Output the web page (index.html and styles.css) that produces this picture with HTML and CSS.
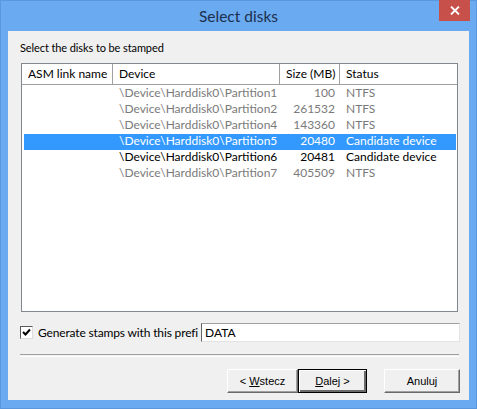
FILE: index.html
```html
<!DOCTYPE html>
<html>
<head>
	<link rel="stylesheet" href="styles.css">
</head>
<body>
	<div class="window">
		<div class="titlebar">
			<span class="title">Select disks</span>
			<button class="close" type="button">
				<svg width="10" height="9" viewBox="0 0 10 9">
					<path d="M1 0.5 L9 8.5 M9 0.5 L1 8.5" stroke="#fff" stroke-width="1.8" fill="none"/>
				</svg>
			</button>
		</div>

		<div class="client">
			<div class="label">Select the disks to be stamped</div>

			<div class="listview">
				<div class="header">
					<div class="col">ASM link name</div>
					<div class="col">Device</div>
					<div class="col">Size (MB)</div>
					<div class="col last">Status</div>
				</div>
				<div class="rows" id="rows"></div>
			</div>

			<div class="prefix">
				<span class="check">
					<svg width="9" height="9" viewBox="0 0 9 9">
						<path d="M1 4 L3.5 6.5 L8 1.5" stroke="#000" stroke-width="2" fill="none"/>
					</svg>
				</span>
				<span class="prefix-label">Generate stamps with this prefi</span>
				<input class="edit" type="text" value="DATA">
			</div>

			<div class="separator"></div>

			<div class="buttons">
				<button class="btn" type="button">&lt; <u>W</u>stecz</button>
				<button class="btn default" type="button"><u>D</u>alej &gt;</button>
				<button class="btn cancel" type="button">Anuluj</button>
			</div>
		</div>
	</div>

	<script>
	window.addEventListener('DOMContentLoaded', () => {
		const disks = [
			{ part: 1, size: 100, status: 'NTFS' },
			{ part: 2, size: 261532, status: 'NTFS' },
			{ part: 4, size: 143360, status: 'NTFS' },
			{ part: 5, size: 20480, status: 'Candidate device', selected: true },
			{ part: 6, size: 20481, status: 'Candidate device' },
			{ part: 7, size: 405509, status: 'NTFS' }
		];

		const rows = document.getElementById('rows');

		for (const disk of disks) {
			const row = document.createElement('div');
			row.className = 'row';
			if (disk.status === 'NTFS') row.classList.add('disabled');
			if (disk.selected) row.classList.add('selected');

			const cells = ['', '\\Device\\Harddisk0\\Partition' + disk.part, disk.size, disk.status];
			cells.forEach((text, i) => {
				const cell = document.createElement('div');
				cell.className = 'cell' + (i === 2 ? ' num' : '');
				cell.textContent = text;
				row.appendChild(cell);
			});

			rows.appendChild(row);
		}
	});
	</script>
</body>
</html>
```

FILE: styles.css
```css
body {
	margin: 0;
	background: #6aaaf0;
}

.window {
	width: 477px;
	height: 409px;
	box-sizing: border-box;
	border: 1px solid #5b97dc;
	background: #6aaaf0;
	display: flex;
	flex-direction: column;
}

.titlebar {
	height: 30px;
	position: relative;
	display: flex;
	align-items: center;
	justify-content: center;
}

.title {
	font-family: Lato, sans-serif;
	font-size: 15.5px;
	color: #1c2f4d;
	margin-top: -1px;
}

.close {
	position: absolute;
	top: -1px;
	right: 6px;
	width: 31px;
	height: 21px;
	border: none;
	padding: 0;
	background: #c7504b;
	display: flex;
	align-items: center;
	justify-content: center;
}

.client {
	flex: 1;
	margin: 0 7px 8px 7px;
	background: #f0f0f0;
	padding: 0 11px 0 12px;
	display: flex;
	flex-direction: column;
	font-family: Lato, sans-serif;
	font-size: 12px;
	color: #000;
}

.label {
	height: 16px;
	margin-top: 9px;
	line-height: 16px;
	font-size: 11px;
	letter-spacing: -0.1px;
}

.listview {
	margin: 7px 0 0 1px;
	height: 249px;
	box-sizing: border-box;
	border: 1px solid #828790;
	background: #fff;
}

.header {
	display: grid;
	grid-template-columns: 91px 167px 60px 1fr;
	height: 20px;
	border-bottom: 1px solid #a0a0a0;
}

.col {
	line-height: 20px;
	padding-left: 6px;
	border-right: 1px solid #a0a0a0;
}

.col.last {
	border-right: none;
}

.rows {
	padding: 1px 0 0 2px;
}

.row {
	display: grid;
	grid-template-columns: 89px 167px 60px 1fr;
	height: 16px;
	line-height: 14px;
	margin-right: 1px;
}

.row.disabled {
	color: #7a7a7a;
}

.row.selected {
	background: #3399ff;
	color: #fff;
}

.cell {
	padding-left: 6px;
	white-space: nowrap;
}

.cell.num {
	text-align: right;
	padding: 0 5px 0 0;
}

.prefix {
	margin-top: 11px;
	height: 19px;
	display: flex;
	align-items: center;
}

.check {
	width: 11px;
	height: 11px;
	border-top: 1px solid #5a5a5a;
	border-left: 1px solid #5a5a5a;
	border-right: 1px solid #dcdcdc;
	border-bottom: 1px solid #dcdcdc;
	background: #fff;
	display: flex;
	align-items: center;
	justify-content: center;
}

.prefix-label {
	margin-left: 5px;
	width: 163px;
	white-space: nowrap;
	letter-spacing: -0.15px;
}

.edit {
	flex: 1;
	height: 19px;
	box-sizing: border-box;
	margin: 0 -2px 0 0;
	border: none;
	border-left: 1px solid #646464;
	border-top: 1px solid #a0a0a0;
	border-right: 1px solid #e3e3e3;
	border-bottom: 1px solid #e3e3e3;
	background: #fff;
	padding: 0 3px;
	font-family: Lato, sans-serif;
	font-size: 12px;
	color: #000;
	outline: none;
}

.separator {
	margin-top: 12px;
	height: 1px;
	border-top: 1px solid #a0a0a0;
	border-bottom: 1px solid #fff;
	margin-right: -1px;
}

.buttons {
	margin-top: 12px;
	display: flex;
	justify-content: flex-end;
	margin-right: -2px;
}

.btn {
	width: 71px;
	height: 24px;
	box-sizing: border-box;
	padding: 0;
	background: #f0f0f0;
	border: 1px solid;
	border-color: #fff #6a6a6a #6a6a6a #fff;
	box-shadow: inset -1px -1px 0 #a0a0a0;
	font-family: "Liberation Sans", sans-serif;
	font-size: 11px;
	color: #000;
}

.btn.default {
	width: 69px;
	border: 1px solid #000;
	box-shadow: inset 1px 1px 0 #fff, inset -2px -2px 0 #6a6a6a;
}

.btn.cancel {
	width: 76px;
	margin-left: 17px;
}
```
